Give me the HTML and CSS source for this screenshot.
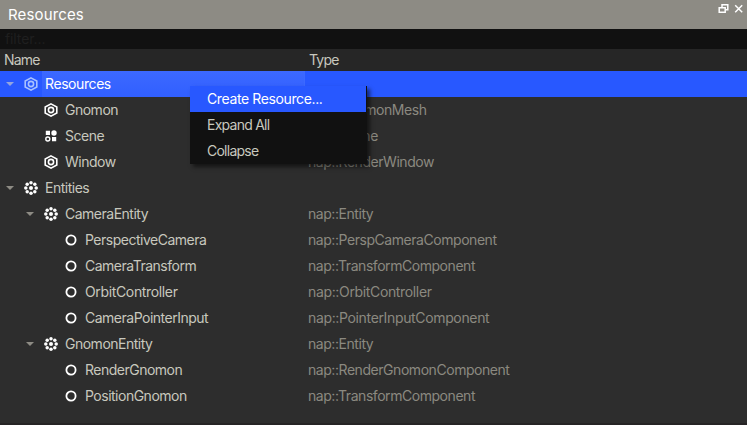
FILE: index.html
```html
<!DOCTYPE html>
<html lang="en">
<head>
<meta charset="utf-8">
<title>Resources</title>
<link rel="stylesheet" href="styles.css">
</head>
<body>
<svg class="defs" width="0" height="0">
  <symbol id="hex" viewBox="0 0 14 14"><g fill="none" stroke="currentColor" stroke-width="1.6"><path d="M7 .9 12.8 4v6L7 13.1 1.2 10V4Z"/><circle cx="7" cy="7" r="2.6"/></g></symbol>
  <symbol id="scene" viewBox="0 0 14 14"><path fill="currentColor" d="M1.8 1.8H6V6H1.8ZM8 8h4.2v4.2H8Z"/><circle cx="10" cy="4" r="2.7" fill="currentColor"/><circle cx="3.8" cy="10" r="2" fill="none" stroke="currentColor" stroke-width="1.4"/></symbol>
  <symbol id="entity" viewBox="0 0 14 14"><g fill="currentColor"><circle cx="7" cy="7" r="2"/><circle cx="7" cy="1.8" r="1.75"/><circle cx="7" cy="12.2" r="1.75"/><circle cx="1.8" cy="7" r="1.75"/><circle cx="12.2" cy="7" r="1.75"/><circle cx="3.2" cy="3.2" r="1.75"/><circle cx="10.8" cy="3.2" r="1.75"/><circle cx="3.2" cy="10.8" r="1.75"/><circle cx="10.8" cy="10.8" r="1.75"/></g></symbol>
  <symbol id="ring" viewBox="0 0 14 14"><circle cx="7" cy="7" r="4.6" fill="none" stroke="currentColor" stroke-width="1.8"/></symbol>
</svg>
<div class="panel">
  <header class="title"><span>Resources</span>
    <svg class="controls" width="28" height="12" viewBox="0 0 28 12"><g fill="none" stroke="#fff" stroke-width="1.5"><path d="M4 4V1.7h5.8v5H7.5"/><path d="M1.2 4.8h6v4.5h-6Z"/><path d="m17.2 2.2 7 7m0-7-7 7"/></g></svg>
  </header>
  <div class="filter">filter...</div>
  <div class="columns"><span class="name">Name</span><span>Type</span></div>
  <div class="tree">
    <div class="row selected"><div class="cell l0"><i class="arrow"></i><svg class="icon"><use href="#hex"/></svg><span class="label">Resources</span></div></div>
    <div class="row"><div class="cell l1"><svg class="icon"><use href="#hex"/></svg><span class="label">Gnomon</span></div><span class="type">nap::GnomonMesh</span></div>
    <div class="row"><div class="cell l1"><svg class="icon"><use href="#scene"/></svg><span class="label">Scene</span></div><span class="type">nap::Scene</span></div>
    <div class="row"><div class="cell l1"><svg class="icon"><use href="#hex"/></svg><span class="label">Window</span></div><span class="type">nap::RenderWindow</span></div>
    <div class="row"><div class="cell l0"><i class="arrow"></i><svg class="icon"><use href="#entity"/></svg><span class="label">Entities</span></div></div>
    <div class="row"><div class="cell l1"><i class="arrow"></i><svg class="icon"><use href="#entity"/></svg><span class="label">CameraEntity</span></div><span class="type">nap::Entity</span></div>
    <div class="row"><div class="cell l2"><svg class="icon"><use href="#ring"/></svg><span class="label">PerspectiveCamera</span></div><span class="type">nap::PerspCameraComponent</span></div>
    <div class="row"><div class="cell l2"><svg class="icon"><use href="#ring"/></svg><span class="label">CameraTransform</span></div><span class="type">nap::TransformComponent</span></div>
    <div class="row"><div class="cell l2"><svg class="icon"><use href="#ring"/></svg><span class="label wide">OrbitController</span></div><span class="type wide">nap::OrbitController</span></div>
    <div class="row"><div class="cell l2"><svg class="icon"><use href="#ring"/></svg><span class="label">CameraPointerInput</span></div><span class="type wide">nap::PointerInputComponent</span></div>
    <div class="row"><div class="cell l1"><i class="arrow"></i><svg class="icon"><use href="#entity"/></svg><span class="label">GnomonEntity</span></div><span class="type">nap::Entity</span></div>
    <div class="row"><div class="cell l2"><svg class="icon"><use href="#ring"/></svg><span class="label">RenderGnomon</span></div><span class="type">nap::RenderGnomonComponent</span></div>
    <div class="row"><div class="cell l2"><svg class="icon"><use href="#ring"/></svg><span class="label">PositionGnomon</span></div><span class="type">nap::TransformComponent</span></div>
  </div>
  <div class="menu">
    <div class="item active">Create Resource...</div>
    <div class="item">Expand All</div>
    <div class="item">Collapse</div>
  </div>
</div>
</body>
</html>
```
FILE: styles.css
```css
* { box-sizing: border-box; }
body { margin: 0; background: #2d2d2d; font: 14px/26px Inter, Roboto, sans-serif; letter-spacing: -0.5px; color: #c8c8be; overflow: hidden; }
.defs { position: absolute; }
.panel { position: relative; height: 425px; display: flex; flex-direction: column; border-bottom: 2px solid #262425; white-space: nowrap; }
.title { height: 29px; flex: none; background: #8d8b84; color: #fff; font-size: 15px; line-height: 30px; letter-spacing: 0.15px; padding: 0 1px 0 8px; display: flex; justify-content: space-between; }
.controls { margin-top: 3px; }
.filter { height: 20px; flex: none; background: #111; color: #1f1f1f; line-height: 20px; padding-left: 5px; letter-spacing: -0.1px; }
.columns { height: 22px; flex: none; background: #262626; line-height: 22px; display: flex; padding-left: 4px; letter-spacing: -0.8px; }
.columns .name { width: 305px; }
.row { height: 26px; display: flex; }
.cell { width: 305px; flex: none; display: flex; align-items: center; }
.l0 { padding-left: 24px; }
.l1 { padding-left: 44px; }
.l2 { padding-left: 64px; }
.icon { width: 14px; height: 14px; flex: none; color: #fff; }
.label { padding-left: 7px; }
.type { color: #8b8980; padding-left: 3px; letter-spacing: -0.45px; }
.wide { letter-spacing: -0.35px; }
.arrow { width: 8px; height: 4px; margin: 0 10px 0 -18px; background: #8d8b84; clip-path: polygon(0 0, 100% 0, 50% 100%); }
.selected { background: #2858ff; color: #fff; }
.selected .arrow { background: #94a5df; }
.selected .icon { color: #a9c2ff; }
.selected .label { flex: 1; height: 26px; margin-left: 4px; padding-left: 3px; letter-spacing: -0.42px; background: linear-gradient(#3c69ff, #315fff); border-right: 1px solid #3c69ff; }
.menu { position: absolute; left: 190px; top: 86px; width: 177px; height: 78px; background: #111; border-right: 1px solid #111; box-shadow: 3px 3px 4px rgba(0,0,0,.55); }
.item { height: 26px; padding-left: 17px; letter-spacing: -0.75px; }
.active { background: #2858ff; color: #fff; letter-spacing: -0.38px; }
```
